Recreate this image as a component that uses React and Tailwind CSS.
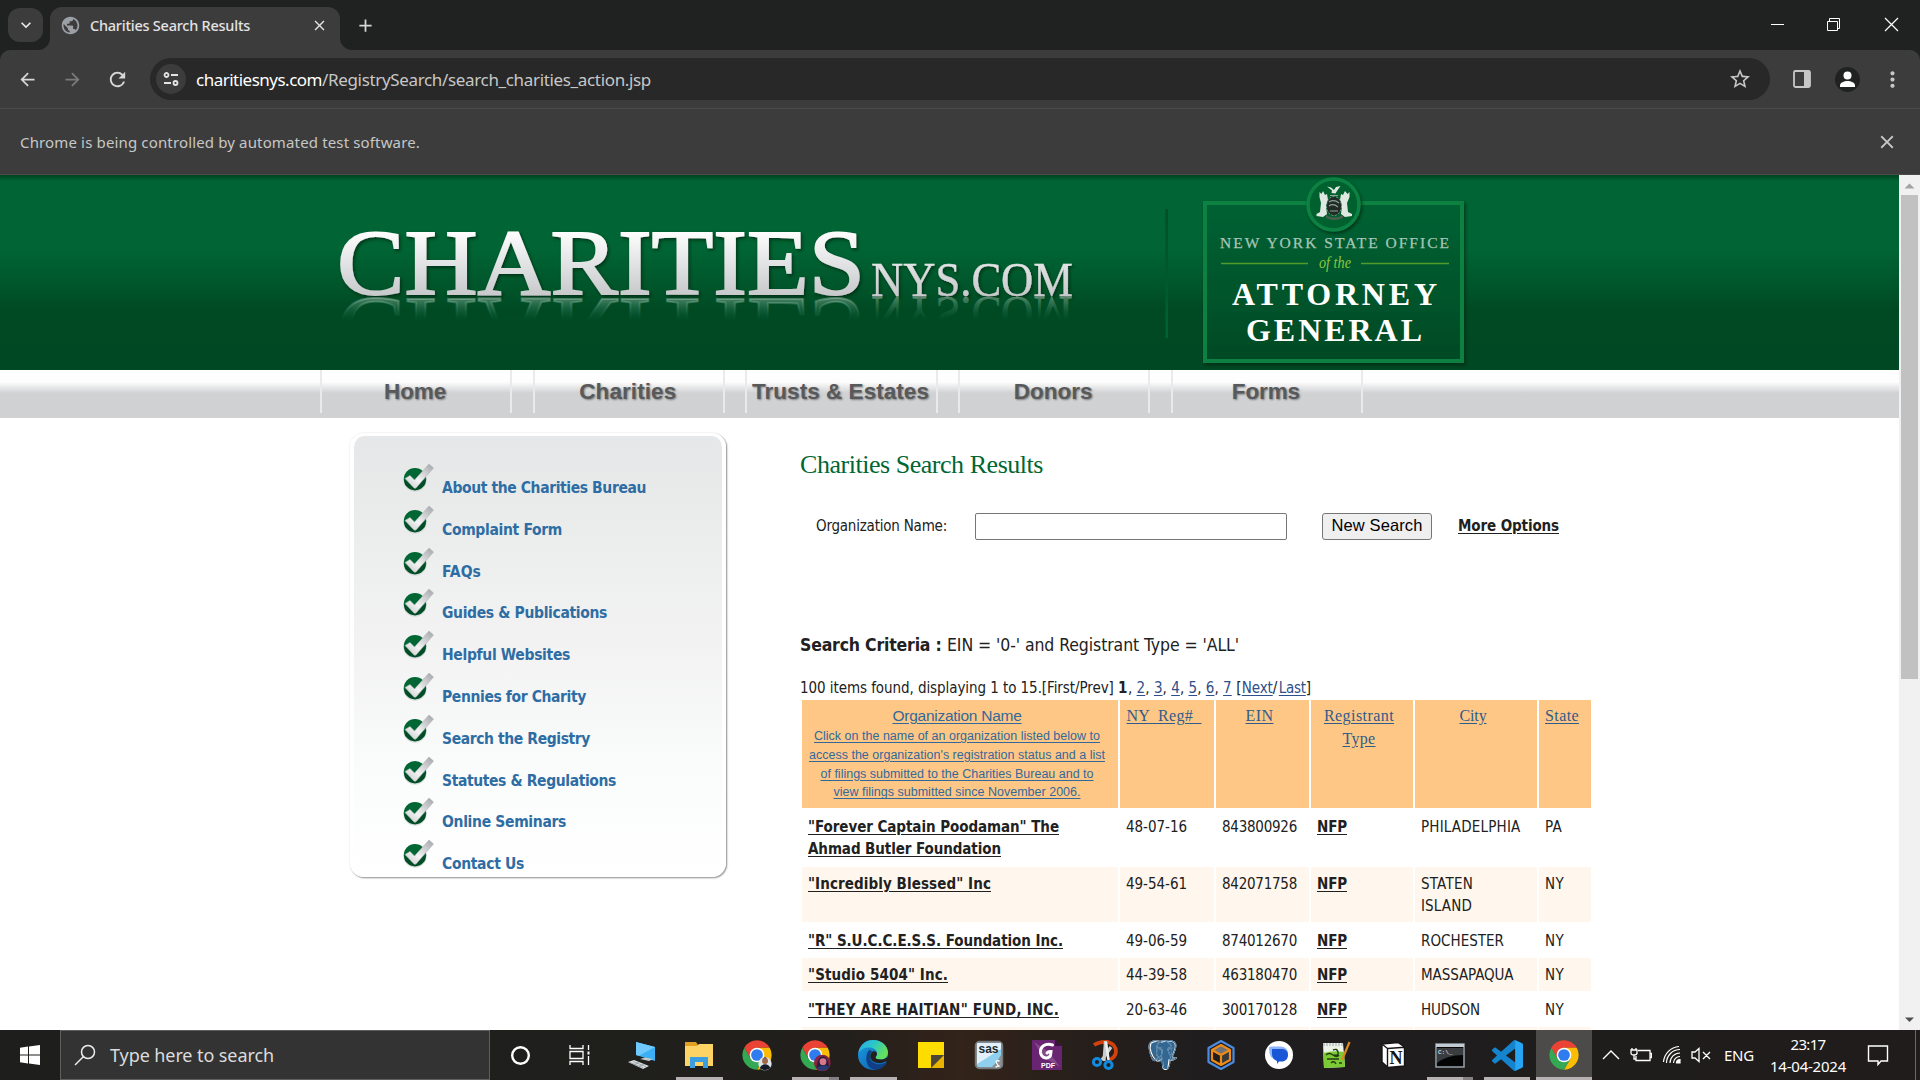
import React, { useLayoutEffect, useRef, useState } from "react";
import { MdArrowBack, MdArrowForward, MdRefresh, MdClose, MdStarBorder, MdPublic, MdAdd, MdMoreVert, MdKeyboardArrowDown } from "react-icons/md";
import { SiPostgresql } from "react-icons/si";

/* Inline text whose tracking is adjusted so that it fills a given width. */
function Fit({ w, className = "", children }) {
  const ref = useRef(null);
  const [spacing, setSpacing] = useState(0);
  useLayoutEffect(() => {
    const natural = ref.current.getBoundingClientRect().width;
    setSpacing((w - natural) / children.length);
  }, [w, children]);
  return (
    <span ref={ref} className={`inline-block whitespace-pre ${className}`} style={{ letterSpacing: `${spacing}px` }}>
      {children}
    </span>
  );
}

function TabStrip() {
  return (
    <div className="flex h-[50px] shrink-0 items-start bg-[#202221]">
      <div className="ml-2 mt-2 flex h-[34px] w-[35px] items-center justify-center rounded-xl bg-[#3c3c3c] text-[#e8e8e8]">
        <MdKeyboardArrowDown size={20} />
      </div>
      <div className="relative ml-[7px] mt-[7px] flex h-[43px] w-[290px] items-center rounded-t-xl bg-[#3c3c3c] pb-[7px] pl-[10px] pr-[12px]">
        <svg className="absolute -left-3 bottom-0" width="12" height="12"><path d="M12 0V12H0A12 12 0 0 0 12 0Z" fill="#3c3c3c" /></svg>
        <svg className="absolute -right-3 bottom-0" width="12" height="12"><path d="M0 0V12H12A12 12 0 0 1 0 0Z" fill="#3c3c3c" /></svg>
        <MdPublic size={21} className="text-[#9aa0a6]" />
        <Fit w={160} className="ml-[9px] pt-px font-['Noto_Sans',sans-serif] text-[14.500px] font-medium text-[#e3e3e3]">Charities Search Results</Fit>
        <MdClose size={17} className="ml-auto text-[#e3e3e3]" />
      </div>
      <MdAdd size={21} className="ml-[15px] mt-[15px] text-[#d6d6d6]" />
      <div className="ml-auto flex h-[50px] items-center">
        <svg className="mr-[21px]" width="150" height="20" viewBox="0 0 150 20" fill="none" stroke="#fff">
          <path d="M22 9.500H35" />
          <path d="M78.500 6.500H88.500V15.500H78.500Z M80.500 6V3.500H90.500V13.500H89" />
          <path d="M136 3L149 16M149 3L136 16" strokeWidth="1.200" />
        </svg>
      </div>
    </div>
  );
}

function Toolbar() {
  return (
    <div className="shrink-0 bg-[#202221]">
      <div className="flex h-[59px] items-center rounded-t-[10px] border-b border-[#4b4b4b] bg-[#3c3c3c] text-[#c7c7c7]">
        <MdArrowBack size={21} className="ml-[17px] text-[#d6d6d6]" />
        <MdArrowForward size={21} className="ml-[24px] text-[#7b7b7b]" />
        <MdRefresh size={23} className="ml-[23px] text-[#d6d6d6]" />
        <div className="ml-[21px] flex h-[42px] w-[1620px] items-center rounded-full bg-[#282828] pl-[6px] pr-[18px]">
          <div className="flex size-[30px] items-center justify-center rounded-full bg-[#3c3c3c]">
            <svg width="16" height="16" viewBox="0 0 16 16" fill="none" stroke="#e3e3e3" strokeWidth="1.800">
              <circle cx="3.500" cy="4" r="2" /><path d="M8 4H15M1 12H8" /><circle cx="12.500" cy="12" r="2" />
            </svg>
          </div>
          <Fit w={126} className="ml-[10px] pt-px font-['Noto_Sans',sans-serif] text-[17px] text-white">charitiesnys.com</Fit>
          <Fit w={329} className="pt-px font-['Noto_Sans',sans-serif] text-[17px] text-[#c7c7c7]">/RegistrySearch/search_charities_action.jsp</Fit>
          <MdStarBorder size={24} className="ml-auto" />
        </div>
        <svg className="ml-[22px]" width="20" height="20" viewBox="0 0 20 20">
          <rect x="2" y="2" width="16" height="16" rx="1.500" fill="none" stroke="#c7c7c7" strokeWidth="1.800" /><path d="M12 2H18V18H12Z" fill="#c7c7c7" />
        </svg>
        <div className="ml-[23px] size-[25px] rounded-full bg-[#202221]">
          <svg width="25" height="25" viewBox="0 0 25 25" fill="#fff"><circle cx="12.500" cy="8.500" r="4" /><path d="M5 20V18.500C5 15.500 9 14 12.500 14S20 15.500 20 18.500V20Z" /></svg>
        </div>
        <MdMoreVert size={25} className="ml-[20px]" />
      </div>
    </div>
  );
}

function InfoBar() {
  return (
    <div className="flex h-[66px] shrink-0 items-center border-b border-[#4b4b4b] bg-[#3c3c3c] pl-5 pr-[22px] text-[#c7c7c7]">
      <Fit w={400} className="pt-0.5 font-['Noto_Sans',sans-serif] text-[15px]">Chrome is being controlled by automated test software.</Fit>
      <MdClose size={22} className="ml-auto" />
    </div>
  );
}

function Banner() {
  return (
    <div className="h-[195px] shrink-0 bg-[linear-gradient(180deg,#00431f_0px,#006434_6px,#006434_75px,#00582c_105px,#004a23_135px,#004723_195px)]">
      <svg width="1899" height="195" viewBox="0 175 1899 195">
        <defs>
          <linearGradient id="silver" x1="0" y1="230" x2="0" y2="296" gradientUnits="userSpaceOnUse"><stop offset="0" stopColor="#fff" /><stop offset="1" stopColor="#c6c8ca" /></linearGradient>
          <linearGradient id="mirror" x1="0" y1="296" x2="0" y2="272" gradientUnits="userSpaceOnUse"><stop offset="0" stopColor="#cfe0d4" stopOpacity=".38" /><stop offset="1" stopColor="#0a8060" stopOpacity="0" /></linearGradient>
          <linearGradient id="plate" x1="0" y1="0" x2="0" y2="1"><stop offset="0" stopColor="#006233" /><stop offset="1" stopColor="#004a25" /></linearGradient>
          <linearGradient id="rule" x1="0" y1="0" x2="0" y2="1"><stop offset="0" stopColor="#004d27" /><stop offset="1" stopColor="#006333" /></linearGradient>
          <filter id="drop" x="-10%" y="-10%" width="120%" height="130%"><feDropShadow dx="1.500" dy="2" stdDeviation="1.500" floodColor="#002812" floodOpacity=".75" /></filter>
        </defs>
        <g fontFamily="'Liberation Serif', serif">
          <g filter="url(#drop)" fill="url(#silver)" stroke="url(#silver)">
            <g id="wordmark">
              <text x="337" y="294" fontSize="94" strokeWidth="1.800" textLength="528" lengthAdjust="spacingAndGlyphs">CHARITIES</text>
              <text x="871" y="296" fontSize="48" strokeWidth=".3" textLength="202" lengthAdjust="spacingAndGlyphs">NYS.COM</text>
            </g>
          </g>
          <g fill="url(#mirror)" stroke="url(#mirror)" transform="translate(0 593) scale(1 -1)">
            <use href="#wordmark" />
          </g>
          <rect x="1165.500" y="209" width="2.500" height="129" fill="url(#rule)" />
          <rect x="1205" y="203" width="257" height="158" fill="url(#plate)" stroke="#0b8143" strokeWidth="4" filter="url(#drop)" />
          <circle cx="1333.500" cy="204.500" r="25.500" fill="#00602f" stroke="#0b8143" strokeWidth="3.500" filter="url(#drop)" />
          <g fill="#dfe9e1">
            <path d="M1327 186.500L1331 187.500L1334 190L1336 187L1340.500 186L1337 191L1335.500 193.500L1331.500 193L1332 190.500Z" />
            <path d="M1319.500 197V192L1321.500 194L1323 191L1325 195L1327 194L1328 200L1326 206L1327 214L1323 217L1316.500 216V214L1320 212L1321 203Z" />
            <path d="M1349.500 197V192L1347.500 194L1345 191L1343 195L1341 194L1340 200L1342 206L1341 214L1345 217L1352 216V214L1348 212L1347 203Z" />
            <path d="M1326 215Q1334 220 1343 215V218Q1334 222 1326 218Z" fill="#49604f" />
          </g>
          <ellipse cx="1334" cy="206" rx="7.500" ry="9.500" fill="#1f2b24" stroke="#8da294" strokeWidth="1" strokeDasharray="2 1.500" />
          <path d="M1330 195.500H1338M1329 202Q1334 199 1339 203M1329 206Q1333 203 1338 207M1330 211H1338" stroke="#8fa397" fill="none" strokeWidth="1.200" />
          <text x="1220" y="248" fontSize="15.500" fill="#a8c6b6" stroke="#a8c6b6" strokeWidth=".25" textLength="229">NEW YORK STATE OFFICE</text>
          <path d="M1221 263.500H1308M1361 263.500H1449" stroke="#529a2c" strokeWidth="1.500" />
          <text x="1319" y="268" fontSize="17" fontStyle="italic" fill="#8cc63f" textLength="32" lengthAdjust="spacingAndGlyphs">of the</text>
          <g fill="#fff" fontWeight="bold">
            <text x="1232" y="305" fontSize="32" textLength="205" lengthAdjust="spacing">ATTORNEY</text>
            <text x="1246" y="341" fontSize="32" textLength="176" lengthAdjust="spacing">GENERAL</text>
          </g>
        </g>
      </svg>
    </div>
  );
}

const NAV = [["Home", 62], ["Charities", 97], ["Trusts & Estates", 177], ["Donors", 79], ["Forms", 68]];

function Nav() {
  return (
    <div className="flex h-[48px] shrink-0 gap-[20.500px] bg-[linear-gradient(180deg,#fff_0px,#fdfdfd_12px,#d1d2d4_23px,#d0d1d3_48px)] pl-[320px]">
      {NAV.map(([label, w]) => (
        <div key={label} className="flex h-[43px] w-[192.200px] items-center justify-center border-x-2 border-x-[#e9eaeb] pr-0.5">
          <Fit w={w} className="font-['Liberation_Sans',sans-serif] text-[22.500px] font-bold text-[#58595b] [text-shadow:1px_1px_2px_rgba(0,0,0,.4)]">{label}</Fit>
        </div>
      ))}
    </div>
  );
}

const LINKS = [["About the Charities Bureau", 204], ["Complaint Form", 120], ["FAQs", 39], ["Guides & Publications", 165], ["Helpful Websites", 128], ["Pennies for Charity", 144], ["Search the Registry", 148], ["Statutes & Regulations", 174], ["Online Seminars", 124], ["Contact Us", 82]];

function CheckBadge() {
  return (
    <svg width="31" height="30" viewBox="0 0 31 30">
      <defs>
        <linearGradient id="badge" x1="0" y1="0" x2="0" y2="1"><stop offset="0.500" stopColor="#006633" /><stop offset="0.600" stopColor="#004d26" /></linearGradient>
        <linearGradient id="tick" x1="0" y1="1" x2="1" y2="0"><stop offset="0" stopColor="#c4c5c7" /><stop offset=".4" stopColor="#f4f4f4" /><stop offset="1" stopColor="#a0a2a6" /></linearGradient>
      </defs>
      <circle cx="12" cy="17.200" r="11.500" fill="#c9ced0" opacity=".7" />
      <circle cx="12" cy="16.200" r="11.200" fill="url(#badge)" />
      <path d="M2 15.500L7 12.500L11.500 17L26 1L30.500 5L13 25Q11.500 26 10 24Z" fill="url(#tick)" stroke="#b0b3b5" strokeWidth=".6" />
    </svg>
  );
}

function Sidebar() {
  return (
    <div className="ml-[350px] mt-[15px] h-[444px] w-[376px] shrink-0 rounded-[14px] border-4 border-t-[3px] border-white bg-[linear-gradient(180deg,#e5e7e8,#eceeed_25%,#f3f3f3_50%,#fafbfb_75%,#fff)] bg-clip-padding pl-[49px] pt-[27px] shadow-[1px_1px_1px_0_#a8a8a8,1px_1px_2px_0_#a8a8a8,0_0_2px_#e8e8e8]">
      {LINKS.map(([label, w]) => (
        <div key={label} className="flex h-[41.800px]">
          <CheckBadge />
          <Fit w={w} className="ml-[8px] mt-[14px] h-[22px] font-['DejaVu_Sans_Condensed','DejaVu_Sans',sans-serif] text-[15.500px] font-bold leading-[22px] text-[#2e6da4]">{label}</Fit>
        </div>
      ))}
    </div>
  );
}

const ROWS = [
  { name: [["\"Forever Captain Poodaman\" The", 251], ["Ahmad Butler Foundation", 193]], reg: "48-07-16", ein: "843800926", city: [["PHILADELPHIA", 99.5]], state: "PA" },
  { name: [["\"Incredibly Blessed\" Inc", 183]], reg: "49-54-61", ein: "842071758", city: [["STATEN", 52], ["ISLAND", 51]], state: "NY" },
  { name: [["\"R\" S.U.C.C.E.S.S. Foundation Inc.", 255]], reg: "49-06-59", ein: "874012670", city: [["ROCHESTER", 83]], state: "NY" },
  { name: [["\"Studio 5404\" Inc.", 140]], reg: "44-39-58", ein: "463180470", city: [["MASSAPAQUA", 92.5]], state: "NY" },
  { name: [["\"THEY ARE HAITIAN\" FUND, INC.", 251]], reg: "20-63-46", ein: "300170128", city: [["HUDSON", 59]], state: "NY" },
];
const HINT = [["Click on the name of an organization listed below to", 286], ["access the organization's registration status and a list", 296], ["of filings submitted to the Charities Bureau and to", 273], ["view filings submitted since November 2006.", 247]];
const HEADS = [
  { lines: [["NY  Reg#  ", 75]] },
  { lines: [["EIN", 28]] },
  { lines: [["Registrant", 70], ["Type", 33]] },
  { lines: [["City", 27]] },
  { lines: [["State", 34]] },
];

function Results() {
  return (
    <div className="ml-[2px] grid w-[789px] grid-cols-[316px_94px_93px_102px_122px_52px] grid-rows-[108px_55px_55px_32px_33px_32px_32px] gap-0.5">
      <div className="flex flex-col items-center bg-[#ffc785] pr-[6px] pt-[4px] font-['Liberation_Sans',sans-serif] text-[#33699a]">
        <Fit w={129} className="text-[15.500px] leading-[23px] underline">Organization Name</Fit>
        {HINT.map(([line, w]) => <Fit key={line} w={w} className="text-[12.500px] leading-[18.800px] underline">{line}</Fit>)}
      </div>
      {HEADS.map(({ lines }, i) => (
        <div key={i} className="flex flex-col items-center bg-[#ffc785] pr-[6px] pt-[4px] font-['Liberation_Serif',serif] text-[16px] leading-[23px] text-[#2f5c8a]">
          {lines.map(([t, w]) => <Fit key={t} w={w} className="underline">{t}</Fit>)}
        </div>
      ))}
      {ROWS.map((r, i) => {
        const cell = `flex flex-col items-start pl-[6px] pt-[6px] leading-[22px] ${i % 2 ? "bg-[#fff7ed]" : "bg-white"}`;
        return (
          <React.Fragment key={r.ein}>
            <div className={cell}>{r.name.map(([t, w]) => <Fit key={t} w={w} className="font-bold underline">{t}</Fit>)}</div>
            <div className={cell}><Fit w={61}>{r.reg}</Fit></div>
            <div className={cell}><Fit w={75}>{r.ein}</Fit></div>
            <div className={cell}><Fit w={30} className="font-bold underline">NFP</Fit></div>
            <div className={cell}>{r.city.map(([t, w]) => <Fit key={t} w={w}>{t}</Fit>)}</div>
            <div className={cell}><Fit w={r.state === "PA" ? 17 : 19}>{r.state}</Fit></div>
          </React.Fragment>
        );
      })}
      {["name", "reg", "ein", "type", "city", "state"].map((k) => <div key={k} className="bg-[#fff7ed]" />)}
    </div>
  );
}

function Content() {
  return (
    <div className="ml-[74px] font-['DejaVu_Sans_Condensed','DejaVu_Sans',sans-serif] text-[15px] text-[#212121] underline-offset-2">
      <h1 className="mt-[32px] h-[30px] font-['Liberation_Serif',serif] text-[26px] leading-[30px] text-[#006633]"><Fit w={243}>Charities Search Results</Fit></h1>
      <div className="mt-[33px] flex h-[27px] items-center pl-4">
        <Fit w={131}>Organization Name:</Fit>
        <input className="ml-[28px] h-[27px] w-[312px] rounded-[2px] border border-[#767676] bg-white" />
        <button className="ml-[35px] flex h-[27px] w-[110px] items-center justify-center rounded-[3px] border border-[#767676] bg-[#efefef] pb-0.5 font-['Liberation_Sans',sans-serif] text-[16.500px] text-black"><Fit w={91}>New Search</Fit></button>
        <Fit w={101} className="ml-[26px] font-bold underline">More Options</Fit>
      </div>
      <div className="mt-[93px] flex h-[24px] text-[17.500px] leading-[24px]">
        <Fit w={147} className="font-bold">{"Search Criteria : "}</Fit>
        <Fit w={292}>EIN = '0-' and Registrant Type = 'ALL'</Fit>
      </div>
      <div className="mt-[20px] flex h-[23px] leading-[22px]">
        <Fit w={318}>{"100 items found, displaying 1 to 15.[First/Prev] "}</Fit>
        <Fit w={10} className="font-bold">1</Fit>
        {["2", "3", "4", "5", "6", "7"].map((n) => (
          <React.Fragment key={n}><Fit w={8.6}>{", "}</Fit><Fit w={8.7} className="text-[#2f4f8a] underline">{n}</Fit></React.Fragment>
        ))}
        <Fit w={10}>{" ["}</Fit><Fit w={31} className="text-[#2f4f8a] underline">Next</Fit><Fit w={6}>/</Fit><Fit w={27} className="text-[#2f4f8a] underline">Last</Fit><span>]</span>
      </div>
      <Results />
    </div>
  );
}

function ScrollBar() {
  return (
    <div className="flex w-[21px] shrink-0 flex-col items-center justify-between bg-[#f1f1f1]">
      <svg width="21" height="20"><path d="M5.500 13.500H15.500L10.500 8.500Z" fill="#a3a3a3" /></svg>
      <div className="mb-auto h-[484px] w-[17px] bg-[#c1c1c1]" />
      <svg width="21" height="20"><path d="M6 7.500H15L10.500 12Z" fill="#505050" /></svg>
    </div>
  );
}

function Chrome({ children }) {
  return (
    <svg width="32" height="32" viewBox="0 0 48 48">
      <path d="M4.950 13A22 22 0 0 1 43.050 13L24 13L14.470 29.500Z" fill="#ea4335" />
      <path d="M43.050 13A22 22 0 0 1 24 46L33.530 29.500L24 13Z" fill="#fbbc05" />
      <path d="M24 46A22 22 0 0 1 4.950 13L14.470 29.500H33.530Z" fill="#34a853" />
      <circle cx="24" cy="24" r="11" fill="#fff" /><circle cx="24" cy="24" r="8.800" fill="#2f7bf0" />
      {children}
    </svg>
  );
}

const Pc = () => (
  <svg width="32" height="34" viewBox="0 0 32 34"><path d="M11 4L30 9V23L11 17Z" fill="#3cb0f4" /><path d="M11 4L30 9L14 17.800L11 17Z" fill="#6fc9fa" /><path d="M15 21L24 23L28 21L20 19.500Z" fill="#bfc9ce" /><path d="M3 24L9 22L24 28L18 31Z" fill="#d9dfe2" /><path d="M5 24.500L18 29.700M8 23.500L21 28.700M9 27L14 24M14 28.500L19 26" stroke="#7f8a90" strokeWidth=".6" /></svg>
);
const Folder = () => (
  <svg width="30" height="28" viewBox="0 0 30 28"><path d="M1 1H12L14 4H28V24H1Z" fill="#dfa024" /><path d="M1 5H13L15 3H29V25H1Z" fill="#fcd364" /><path d="M6 27V16H24V27H19V21H11V27Z" fill="#3b9ee0" /></svg>
);
const Edge = () => (
  <svg width="32" height="32" viewBox="0 0 32 32">
    <defs>
      <linearGradient id="e1" x1="0" y1="0" x2="1" y2=".5"><stop offset="0" stopColor="#2aa8ea" /><stop offset=".5" stopColor="#2cc7c8" /><stop offset="1" stopColor="#66e05a" /></linearGradient>
      <linearGradient id="e2" x1="0" y1="0" x2="1" y2="1"><stop offset="0" stopColor="#1b9de2" /><stop offset="1" stopColor="#0c5aa8" /></linearGradient>
    </defs>
    <circle cx="16" cy="16" r="15" fill="url(#e2)" />
    <path d="M1.500 14C3 5 9 1 16 1C25 1 31 7 31 13.500C31 18 27.500 20.500 23.500 20.500C20 20.500 18.500 19.500 18.500 18.500C18.500 17.500 20 17 20 14.500C20 11 16.500 8.500 12 8.500C7 8.500 3.500 10.500 1.500 14Z" fill="url(#e1)" />
    <path d="M12.500 11C8 14 7 30 19 30.700C24 30.500 28 27.500 29.800 23.500C25 26.500 15 26.500 13 19C12.300 16 13.500 13.500 15.500 12.500Z" fill="#103f85" />
    <path d="M15.800 12.500C13.500 14 12.500 17 14 20C16 24 23 25.500 28 22.500L32 22V17C29 20 26 20.500 23.500 20.500C20 20.500 18.500 19.500 18.500 18.500C18.500 17.500 20 17 20 14.500C19.500 12.500 17.500 11.800 15.800 12.500Z" fill="#221f1d" />
  </svg>
);
const Note = () => (
  <svg width="28" height="28" viewBox="0 0 28 28"><path d="M1 1H27V14H14V27H1Z" fill="#ffdc00" /><path d="M14 14H27L14 27Z" fill="#4b4636" /><path d="M27 14V27H14Z" fill="#e8b400" /></svg>
);
const Sas = () => (
  <svg width="30" height="30" viewBox="0 0 30 30"><rect x="1.500" y="1.500" width="27" height="27" rx="4" fill="#8a9094" stroke="#74797c" strokeWidth="1.500" /><path d="M3 3H27V15Q24 21 18 27H5Q3 27 3 25Z" fill="#8fd0ee" /><path d="M3 3H27V9L3 24Z" fill="#e2f1f9" /><text x="4.500" y="13" fontFamily="'Liberation Sans', sans-serif" fontSize="12" fontWeight="bold" fill="#1d2930" textLength="20" lengthAdjust="spacingAndGlyphs">sas</text><path d="M25.500 21Q21 20 22.500 23T25 26T21.500 27" fill="none" stroke="#fff" strokeWidth="1.300" /></svg>
);
const Pdf = () => (
  <svg width="30" height="32" viewBox="0 0 30 32"><path d="M0 1H23L30 7V31H0Z" fill="#692572" /><path d="M23 1L30 7H23Z" fill="#3a1041" /><path d="M2 3L17 13L28 28L11 18Z" fill="#93609b" opacity=".6" /><path d="M20.500 6C13 3.500 8 8 8.500 13.500C9.500 19.500 16 20.500 18.500 16.500L19 12.500Q16.500 12 15 14" fill="none" stroke="#fff" strokeWidth="3" strokeLinecap="round" /><text x="9" y="29" fontFamily="'Liberation Sans', sans-serif" fontSize="7" fontWeight="bold" fill="#fff">PDF</text></svg>
);
const Snip = () => (
  <svg width="30" height="32" viewBox="0 0 30 32" fill="none"><path d="M4 6Q10 2 18 3Q26 5 26 13Q25 19 19 21" stroke="#d5410c" strokeWidth="3.800" /><path d="M15.500 2L14 22M21 8L12 21" stroke="#c9cdd0" strokeWidth="3.200" /><path d="M16 3L18.500 21" stroke="#eceeef" strokeWidth="2.500" /><circle cx="7" cy="23" r="3.600" stroke="#118be0" strokeWidth="3" /><circle cx="18.500" cy="26" r="3.600" stroke="#118be0" strokeWidth="3" /></svg>
);
const Pg = () => (
  <div className="relative size-[30px]">
    <svg className="absolute inset-0" width="30" height="30" viewBox="0 0 30 30"><path d="M3 3Q9 0 14 2Q20 0 26 2Q29 5 26 12L24 17L28 18Q25 21 21 20L20 28Q17 31 15 28L14 20L9 21Q4 18 2 8Z" fill="#336791" stroke="#fff" strokeWidth="1.200" /></svg>
    <SiPostgresql size={29} className="relative text-[#336791] [filter:drop-shadow(0_0_.6px_#fff)]" />
  </div>
);
const Cube = () => (
  <svg width="30" height="32" viewBox="0 0 30 32" fill="none" strokeLinejoin="round"><path d="M15 2L27.500 9V23L15 30L2.500 23V9Z" stroke="#4b8be0" strokeWidth="2.200" /><path d="M15 6L24 11L15 16L6 11Z" fill="#6f7377" /><path d="M15 16L24 11V21L15 26Z" fill="#35393c" /><path d="M15 6L24 11V21L15 26L6 21V11ZM6 11L15 16L24 11M15 16V26" stroke="#ef8b17" strokeWidth="2.200" /></svg>
);
const Messages = () => (
  <svg width="30" height="30" viewBox="0 0 30 30"><circle cx="15" cy="15" r="14" fill="#fff" /><path d="M5 8Q5 6.500 7 6.500H17Q24 7 24 14T17 21H13L7 17Q5 13 5 8Z" fill="#8db4fb" /><path d="M8 9H19Q24 10 24 15T19 21.500H15L13 24V21Q8 19 8 14Z" fill="#1a57d6" /></svg>
);
const Notepad = () => (
  <svg width="30" height="30" viewBox="0 0 30 30"><path d="M2 3H22L24 27L3 28Z" fill="#eef3ea" /><path d="M2 13Q12 10 23 12L24 27L3 28Z" fill="#7ccb35" /><path d="M3 3V6M6 3V6M9 3V6M12 3V6M15 3V6M18 3V6M21 3V6" stroke="#9aa3aa" /><path d="M5 15Q8 12 12 15T18 15M12 10Q16 8 17 12T13 15M6 19H18M10 23Q13 20 15 24M18 23H21" fill="none" stroke="#243c12" strokeWidth="1.400" /><path d="M28.500 2L21 20" stroke="#d98a1e" strokeWidth="2.200" /></svg>
);
const Notion = () => (
  <svg width="26" height="28" viewBox="0 0 26 28"><path d="M2 3L18 1.500L24.500 6V25L8 26.500L2 21Z" fill="#fff" /><path d="M2 3L18 1.500L24.500 6V25L8 26.500L2 21ZM2 3L7.500 7.500V26M7.500 7.500L24.500 6.300" fill="none" stroke="#151515" strokeWidth="1.400" /><text x="9.500" y="22.500" fontFamily="'Liberation Serif', serif" fontSize="18" fontWeight="bold" fill="#151515">N</text></svg>
);
const Cmd = () => (
  <svg width="30" height="26" viewBox="0 0 30 26"><rect x="1" y="2" width="28" height="23" fill="#050505" stroke="#98a3ab" strokeWidth="1.500" /><path d="M1 2H29V5H1Z" fill="#c2cbd1" /><path d="M2 6H28V13Q12 13 2 21Z" fill="#3a3d3f" /><text x="3" y="11.500" fontFamily="'Liberation Mono', monospace" fontSize="6" fill="#fff">C:\_</text></svg>
);
const Code = () => (
  <svg width="31" height="31" viewBox="0 0 24 24"><path d="M23.150 2.587L18.210.21a1.494 1.494 0 0 0-1.705.29l-9.460 8.630-4.120-3.128a.999.999 0 0 0-1.276.057L.327 7.261A1 1 0 0 0 .326 8.740L3.899 12 .326 15.260a1 1 0 0 0 .001 1.479L1.650 17.940a.999.999 0 0 0 1.276.057l4.120-3.128 9.460 8.630a1.492 1.492 0 0 0 1.704.290l4.942-2.377A1.500 1.500 0 0 0 24 20.060V3.939a1.500 1.500 0 0 0-.850-1.352zm-5.146 14.861L10.826 12l7.178-5.448v10.896z" fill="#1484cf" /><path d="M18 .2L23.150 2.587Q24 3 24 3.939V20.060Q24 21 23.150 21.400L18 23.900Z" fill="#27a5f2" /></svg>
);

const APPS = [
  { w: 58, el: <Pc /> },
  { w: 58, el: <Folder />, bar: "w-[47px]" },
  { w: 58, el: <Chrome><circle cx="36" cy="37" r="10" fill="#dfe5e6" /><circle cx="36" cy="33" r="4.500" fill="#a0694a" /><path d="M32 31Q36 24 40.500 31L39 29H33Z" fill="#211" /><path d="M28 44Q30 38 36 38T44 44Q37 49 28 44Z" fill="#141a2a" /></Chrome> },
  { w: 58, el: <Chrome><circle cx="35" cy="36" r="12.500" fill="#8b2340" /><path d="M26 44Q28 26 36 26T45 44Z" fill="#2b1d3d" /><circle cx="36" cy="34" r="5" fill="#d9788c" /><path d="M26 44Q36 36 46 42Q36 52 26 44Z" fill="#273c74" /></Chrome>, bar: "w-[47px] border-r-[10px] border-[#858083]" },
  { w: 58, el: <Edge />, bar: "w-[47px]" },
  { w: 58, el: <Note /> },
  { w: 58, el: <Sas /> },
  { w: 58, el: <Pdf /> },
  { w: 58, el: <Snip /> },
  { w: 58, el: <Pg /> },
  { w: 58, el: <Cube /> },
  { w: 57, el: <Messages /> },
  { w: 57, el: <Notepad /> },
  { w: 57, el: <Notion /> },
  { w: 57, el: <Cmd />, bar: "w-[46px] border-r-[10px] border-[#858083]" },
  { w: 58, el: <Code />, bar: "w-[46px]" },
  { w: 56, el: <Chrome />, bar: "w-[56px]", active: true },
];

function Taskbar() {
  return (
    <div className="flex h-[50px] shrink-0 items-center bg-[linear-gradient(90deg,#1e1e1d_0,#1f1f1c_620px,#221f1c_840px,#33231a_960px,#261f1b_1080px,#1f1d1e_1200px,#1f1c1b_1920px)] font-['Noto_Sans',sans-serif] text-white">
      <svg className="ml-5" width="20" height="20" viewBox="0 0 20 20" fill="#fff"><path d="M0 2.700L8 1.500V9.400H0ZM9 1.400L20 0V9.400H9ZM0 10.400H8V18.500L0 17.300ZM9 10.400H20V20L9 18.600Z" /></svg>
      <div className="ml-[20px] flex h-[50px] w-[430px] items-center border border-[#5f5f5f] bg-[#333] pl-[13px]">
        <svg width="22" height="22" viewBox="0 0 22 22" fill="none" stroke="#eee" strokeWidth="1.500"><circle cx="14" cy="8" r="6.500" /><path d="M9.500 12.500L1 21" /></svg>
        <Fit w={164} className="ml-[14px] text-[18px] text-[#dcdcdc]">Type here to search</Fit>
      </div>
      <svg className="ml-[20px]" width="21" height="21"><circle cx="10.500" cy="10.500" r="8.300" fill="none" stroke="#fff" strokeWidth="2.400" /></svg>
      <svg className="ml-[37px]" width="24" height="22" viewBox="0 0 24 22" fill="none" stroke="#fff" strokeWidth="1.300"><path d="M2 1V4.500H15V1M2 21V17.500H15V21M2 7.500H15V14.500H2ZM20.500 1V6M20.500 12V21" /><rect x="19.500" y="7.500" width="2" height="3" fill="#fff" stroke="none" /></svg>
      <div className="ml-[20px] flex h-[50px]">
        {APPS.map(({ w, el, bar, active }, i) => (
          <div key={i} className={`relative flex items-center justify-center ${active ? "bg-[#4c4b49]" : ""}`} style={{ width: w }}>
            {el}
            {bar && <div className={`absolute bottom-0 h-[3px] bg-[#b7b1b3] ${bar}`} />}
          </div>
        ))}
      </div>
      <svg className="ml-[9px]" width="20" height="20" viewBox="0 0 20 20" fill="none" stroke="#fff" strokeWidth="1.400"><path d="M2 14L10 6L18 14" /></svg>
      <svg className="ml-[9px]" width="22" height="20" viewBox="0 0 22 20" fill="none" stroke="#fff" strokeWidth="1.300"><path d="M8 5.500H20V15.500H6V11M20 8.500H21.500V12.500H20M2 3V5M6 3V5M1 5H7V8Q7 10 4 10T1 8ZM4 10V14H6" /></svg>
      <svg className="ml-[10px]" width="20" height="20" viewBox="0 0 20 20" fill="none" stroke="#fff" strokeWidth="1.200"><path d="M4.500 18A13.500 13.500 0 0 1 18 4.500M8 18A10 10 0 0 1 18 8M11.500 18A6.500 6.500 0 0 1 18 11.500M1.500 17A17 17 0 0 1 17 1.500" /><path d="M14.500 18A3.500 3.500 0 0 1 18 14.500V18Z" fill="#fff" /></svg>
      <svg className="ml-[9px]" width="21" height="20" viewBox="0 0 21 20" fill="none" stroke="#fff" strokeWidth="1.300"><path d="M1 7H4L8 3.500V16.500L4 13H1ZM12 7L19 14M19 7L12 14" /></svg>
      <Fit w={30} className="ml-[12px] text-[15px]">ENG</Fit>
      <div className="ml-[16px] flex w-[76px] flex-col items-center text-[15px] leading-[22.500px]">
        <Fit w={35}>23:17</Fit>
        <Fit w={76}>14-04-2024</Fit>
      </div>
      <svg className="ml-[21px]" width="22" height="22" viewBox="0 0 22 22" fill="none" stroke="#fff" strokeWidth="1.400"><path d="M1.500 2H20.500V17H14L11 20.500V17H1.500Z" /></svg>
      <div className="ml-auto mr-[4px] h-full w-px bg-[#6a6868]" />
    </div>
  );
}

export default function App() {
  return (
    <div className="flex h-[1080px] w-[1920px] flex-col overflow-hidden bg-white">
      <TabStrip />
      <Toolbar />
      <InfoBar />
      <div className="flex min-h-0 flex-1">
        <div className="flex w-[1899px] flex-col overflow-hidden">
          <Banner />
          <Nav />
          <div className="flex min-h-0 flex-1 overflow-hidden">
            <Sidebar />
            <Content />
          </div>
        </div>
        <ScrollBar />
      </div>
      <Taskbar />
    </div>
  );
}
